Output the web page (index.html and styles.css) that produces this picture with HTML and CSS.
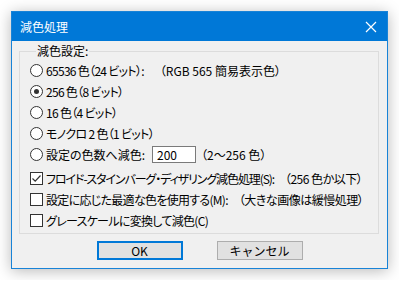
FILE: index.html
```html
<!DOCTYPE html>
<html lang="ja">
<head>
<meta charset="utf-8">
<title>減色処理</title>
<link rel="stylesheet" href="styles.css">
</head>
<body>
<div class="dialog">
  <div class="titlebar">
    <span class="title">減色処理</span>
    <svg class="close" width="12" height="12" viewBox="0 0 12 12"><path d="M1 1 L11 11 M11 1 L1 11" stroke="#fff" stroke-width="1.2" fill="none"/></svg>
  </div>
  <div class="client">
    <fieldset class="group">
      <legend class="legend">減色設定:</legend>
      <div class="row"><span class="radio"></span><span class="label">65536 色（24 ビット）:</span><span class="note note-rgb">（RGB 565 簡易表示色）</span></div>
      <div class="row"><span class="radio checked"></span><span class="label">256 色（8 ビット）</span></div>
      <div class="row"><span class="radio"></span><span class="label">16 色（4 ビット）</span></div>
      <div class="row"><span class="radio"></span><span class="label">モノクロ 2 色（1 ビット）</span></div>
      <div class="row"><span class="radio"></span><span class="label label-fixed">設定の色数へ減色:</span><span class="edit">200</span><span class="note">（2～256 色）</span></div>
      <div class="row row-gap"><span class="check checked"><svg width="11" height="11" viewBox="0 0 11 11"><path d="M1.5 5.5 L4.2 8.2 L9.5 2.5" stroke="#333" stroke-width="1.2" fill="none"/></svg></span><span class="label label-tight">フロイド-スタインバーグ・ディザリング減色処理(S):</span><span class="note note-wide">（256 色か以下）</span></div>
      <div class="row"><span class="check"></span><span class="label">設定に応じた最適な色を使用する(M):</span><span class="note note-wide">（大きな画像は緩慢処理）</span></div>
      <div class="row"><span class="check"></span><span class="label">グレースケールに変換して減色(C)</span></div>
    </fieldset>
    <div class="buttons">
      <button class="btn btn-default">OK</button>
      <button class="btn">キャンセル</button>
    </div>
  </div>
</div>
</body>
</html>
```
FILE: styles.css
```css
html, body {
  margin: 0;
  padding: 0;
  background: #ffffff;
}
body {
  padding: 11px;
  font-family: "Noto Sans CJK JP", "Noto Sans", sans-serif;
  font-size: 12px;
  font-feature-settings: "palt" 1;
  color: #000;
}
.dialog {
  width: 377px;
  height: 258px;
  box-sizing: border-box;
  border: 1px solid #1883d7;
  background: #f0f0f0;
  box-shadow: 0 2px 14px rgba(0,0,0,0.28);
  display: flex;
  flex-direction: column;
}
.titlebar {
  height: 29px;
  background: #0078d7;
  display: flex;
  align-items: center;
  justify-content: space-between;
  padding: 0 10px 0 8px;
  color: #fff;
}
.title {
  font-size: 12px;
  line-height: 14px;
  font-feature-settings: normal;
}
.close {
  display: block;
}
.client {
  flex: 1;
  display: flex;
  flex-direction: column;
}
.group {
  margin: 3px 8px 0 7px;
  padding: 2px 0 2px 10px;
  border: 1px solid #dcdcdc;
  height: 190px;
  box-sizing: border-box;
  min-width: 0;
}
.legend {
  padding: 0 1px;
  margin-left: 6px;
  line-height: 14px;
  font-feature-settings: normal;
}
.row {
  height: 21px;
  display: flex;
  align-items: center;
  white-space: nowrap;
}
.row-gap {
  margin-top: 3px;
}
.radio {
  width: 11px;
  height: 11px;
  border: 1px solid #333;
  border-radius: 50%;
  background: #fff;
  margin-right: 3px;
  position: relative;
  flex: none;
}
.radio.checked::after {
  content: "";
  position: absolute;
  left: 3px;
  top: 3px;
  width: 5px;
  height: 5px;
  border-radius: 50%;
  background: #333;
}
.check {
  width: 11px;
  height: 11px;
  border: 1px solid #333;
  background: #fff;
  margin-right: 3px;
  flex: none;
  display: flex;
}
.label {
  line-height: 14px;
  letter-spacing: -0.7px;
}
.label-tight {
  letter-spacing: -1.1px;
}
.label-fixed {
  width: 106px;
  letter-spacing: 0;
}
.note {
  margin-left: 5px;
  line-height: 14px;
}
.note-rgb {
  margin-left: 16px;
}
.note-wide {
  margin-left: 11px;
  letter-spacing: -0.5px;
}
.edit {
  width: 38px;
  height: 15px;
  border: 1px solid #7a7a7a;
  background: #fff;
  padding-left: 4px;
  line-height: 15px;
}
.buttons {
  flex: 1;
  display: flex;
  justify-content: center;
  align-items: center;
  gap: 34px;
  padding-bottom: 2px;
}
.btn {
  width: 86px;
  height: 19px;
  box-sizing: border-box;
  background: #e1e1e1;
  border: 1px solid #adadad;
  font-family: "Noto Sans CJK JP", "Noto Sans", sans-serif;
  font-size: 12px;
  line-height: 15px;
  padding: 0;
  color: #000;
}
.btn-default {
  border: 2px solid #0078d7;
}
```
